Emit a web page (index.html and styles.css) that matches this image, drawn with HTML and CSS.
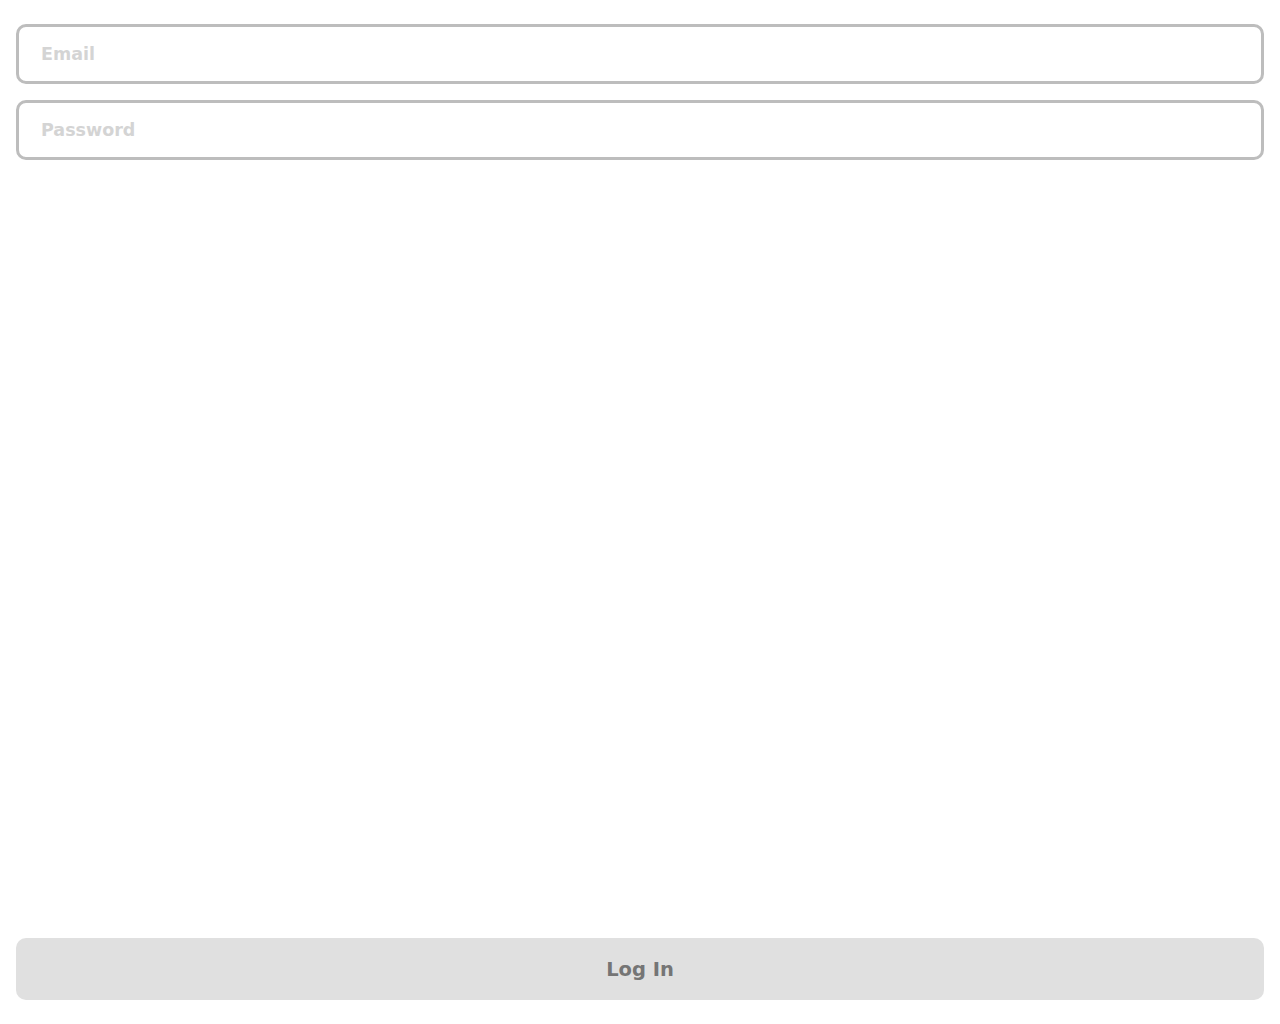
FILE: index.html
```html
<!DOCTYPE html>
<html>
<head>
<meta charset="utf-8">
<link rel="stylesheet" href="styles.css">
</head>
<body>
<div class="page">
  <form class="login">
    <div class="fields">
      <input class="field" type="email" placeholder="Email">
      <input class="field" type="password" placeholder="Password">
    </div>
    <button class="submit" type="button">Log In</button>
  </form>
</div>
</body>
</html>
```
FILE: styles.css
```css
html, body {
  margin: 0;
  padding: 0;
  background: #ffffff;
}
.page {
  height: 100vh;
  box-sizing: border-box;
  padding: 24px 16px 24px 16px;
}
.login {
  height: 100%;
  display: flex;
  flex-direction: column;
  justify-content: space-between;
}
.fields {
  display: flex;
  flex-direction: column;
  gap: 16px;
}
.field {
  box-sizing: border-box;
  width: 100%;
  height: 60px;
  border: 3px solid #bdbdbd;
  border-radius: 10px;
  padding: 0 22px;
  font-family: "DejaVu Sans", sans-serif;
  font-weight: bold;
  font-size: 17.5px;
  color: #555;
  background: #fff;
  outline: none;
}
.field::placeholder {
  color: #d4d4d4;
  opacity: 1;
}
.submit {
  box-sizing: border-box;
  width: 100%;
  height: 62px;
  border: none;
  border-radius: 10px;
  background: #e0e0e0;
  color: #757575;
  font-family: "DejaVu Sans", sans-serif;
  font-weight: bold;
  font-size: 19.5px;
  padding: 0;
}
```
